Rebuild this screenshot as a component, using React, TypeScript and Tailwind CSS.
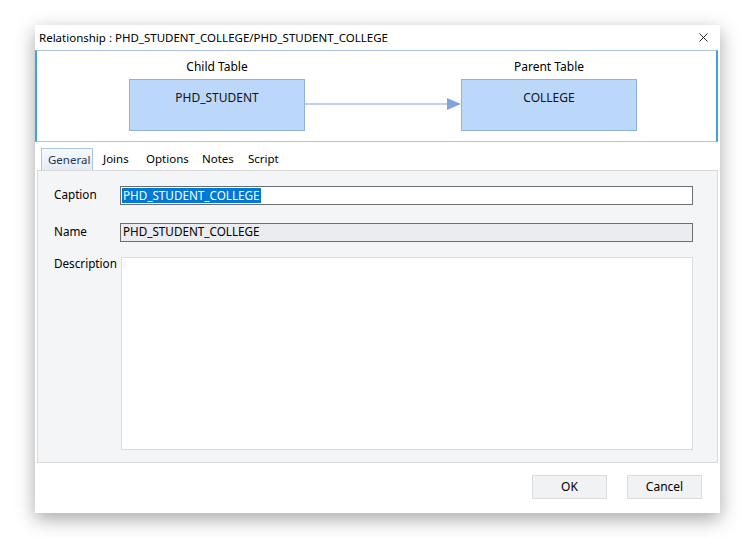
import { X } from "lucide-react";

function TableBox({ label, name }: { label: string; name: string }) {
  return (
    <div className="flex flex-col items-center w-[176px]">
      <div className="h-[18px] leading-[18px] text-[12px] text-black">{label}</div>
      <div className="mt-[3px] w-[176px] h-[52px] bg-[#bbd8fa] border border-[#8fb2dd] text-center pt-[9px] text-[12px] text-[#111]">
        {name}
      </div>
    </div>
  );
}

const tabs = [
  { name: "General", w: "w-[52px]" },
  { name: "Joins", w: "w-[43px]" },
  { name: "Options", w: "w-[56px]" },
  { name: "Notes", w: "w-[46px]" },
  { name: "Script", w: "w-[46px]" },
];

export default function App() {
  return (
    <div
      className="w-[755px] h-[538px] bg-white pt-[25px] pl-[35px]"
      style={{ fontFamily: '"Noto Sans", "Segoe UI", Arial, sans-serif' }}
    >
      <div className="w-[685px] h-[488px] bg-white flex flex-col shadow-[0_6px_18px_rgba(0,0,0,0.35)]">
        {/* title bar */}
        <div className="h-[25px] flex items-center justify-between pl-[4px] pr-[9px]">
          <span className="text-[11.5px] text-black">Relationship : PHD_STUDENT_COLLEGE/PHD_STUDENT_COLLEGE</span>
          <X size={15} strokeWidth={1.3} className="text-black" />
        </div>

        {/* diagram */}
        <div className="mr-[2px] h-[92px] border-y border-[#a8c3e6] border-l-2 border-l-[#3ba3dd] border-r-2 border-r-[#3ba3dd] bg-white flex pt-[7px] pl-[92px]">
          <TableBox label="Child Table" name="PHD_STUDENT" />
          <svg width="156" height="78">
            <line x1="0" y1="46" x2="145" y2="46" stroke="#7fa6db" strokeWidth="1" />
            <polygon points="142,40 156,46 142,52" fill="#7fa6db" />
          </svg>
          <TableBox label="Parent Table" name="COLLEGE" />
        </div>

        {/* tabs */}
        <div className="flex items-end h-[28px] pl-[6px] pt-[6px] text-[11.5px] text-black">
          {tabs.map((t, i) =>
            i === 0 ? (
              <div
                key={t.name}
                className={`${t.w} h-[22px] pl-[6px] flex items-center border border-b-0 border-[#a9c4e6] bg-gradient-to-b from-[#f7fafe] to-[#e2ebf6] text-[#26374f]`}
              >
                {t.name}
              </div>
            ) : (
              <div key={t.name} className={`${t.w} h-[22px] pl-[10px] flex items-center`}>
                {t.name}
              </div>
            )
          )}
        </div>

        {/* tab panel */}
        <div className="ml-[2px] mr-[2px] h-[293px] bg-[#f4f5f7] border border-[#dadada] pl-[16px] pr-[24px] pt-[14px] text-[11.7px] text-black">
          <div className="flex items-center h-[20px]">
            <div className="w-[66px]">Caption</div>
            <div className="flex-1 h-[19px] bg-white border border-[#6e6e6e] flex items-center pl-[1px]">
              <span className="bg-[#0078d7] text-white leading-[15px] px-[1px]">PHD_STUDENT_COLLEGE</span>
            </div>
          </div>
          <div className="flex items-center h-[20px] mt-[17px]">
            <div className="w-[66px]">Name</div>
            <div className="flex-1 h-[19px] bg-[#eaecef] border border-[#6e6e6e] flex items-center pl-[2px]">
              PHD_STUDENT_COLLEGE
            </div>
          </div>
          <div className="flex mt-[15px]">
            <div className="w-[67px] -mt-[2px]">Description</div>
            <div className="flex-1 h-[193px] bg-white border border-[#dcdcdc]" />
          </div>
        </div>

        {/* buttons */}
        <div className="flex justify-end gap-[20px] pr-[18px] pt-[12px] text-[12px] text-black">
          <button className="w-[75px] h-[24px] bg-[#f1f2f4] border border-[#dcdcdc]">OK</button>
          <button className="w-[75px] h-[24px] bg-[#f1f2f4] border border-[#dcdcdc]">Cancel</button>
        </div>
      </div>
    </div>
  );
}
